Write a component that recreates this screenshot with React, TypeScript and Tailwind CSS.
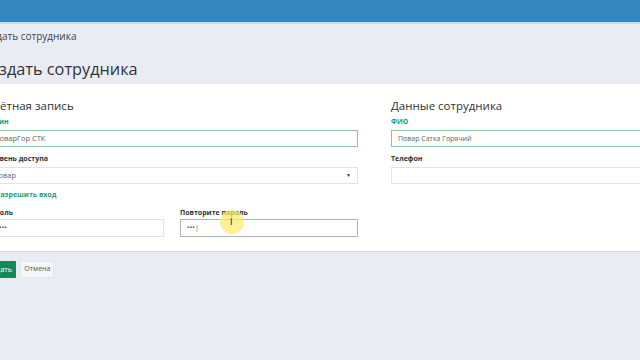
export default function App() {
  return (
    <div className="relative w-[640px] h-[360px] overflow-hidden bg-[#e9ecf3] font-['Open_Sans',sans-serif] text-[#333]">
      {/* Top bar */}
      <div className="h-[22px] bg-[#3585bf]" />
      <div className="h-[2px] bg-[#bfe3ee]" />

      <div className="-ml-[21px] w-[900px]">
        {/* Breadcrumb */}
        <div className="h-[24px] pt-[6px] text-[10px] leading-[12px] text-[#444]">Создать сотрудника</div>

        {/* Title */}
        <h1 className="h-[36px] pt-[10px] text-[16.3px] leading-[22px] text-[#333]">Создать сотрудника</h1>

        {/* Panel */}
        <div className="bg-white border-b border-[#d6dae1] h-[168px] pt-[14px] pl-[7px]">
          <div className="flex gap-[33px]">
            {/* Account */}
            <div className="w-[372px]">
              <h2 className="text-[11.5px] leading-[16px] text-[#333]">Учётная запись</h2>
              <label className="block mt-[3px] text-[7px] leading-[10px] font-bold text-[#1e9b6c]">Логин</label>
              <div className="mt-[3px] h-[17px] border border-[#86c5ab] bg-[#fdfefb] px-[7px] text-[7.5px] leading-[15px] text-[#666]">ПоварГор СТК</div>
              <label className="block mt-[7px] text-[7px] leading-[10px] font-bold text-[#333]">Уровень доступа</label>
              <div className="mt-[3px] h-[17px] border border-[#e2e4e8] px-[6px] flex items-center justify-between text-[7.5px] text-[#666]">
                <span>Повар</span>
                <span className="text-[5px] text-[#333]">▼</span>
              </div>
              <label className="block mt-[6px] ml-[10px] text-[7px] leading-[10px] font-bold text-[#2a9d6f]">Разрешить вход</label>
              <div className="mt-[9px] grid grid-cols-2 gap-[16px]">
                <div>
                  <label className="block text-[7px] leading-[8px] font-bold text-[#333]">Пароль</label>
                  <div className="mt-[2px] h-[18px] border border-[#e2e4e8] px-[12px] text-[7px] leading-[16px] text-[#555]">•••</div>
                </div>
                <div>
                  <label className="block text-[7px] leading-[8px] font-bold text-[#333]">Повторите пароль</label>
                  <div className="mt-[2px] h-[18px] border border-[#a9b7b3] px-[6px] text-[7px] leading-[16px] text-[#555]">•••|</div>
                </div>
              </div>
            </div>

            {/* Employee */}
            <div className="w-[380px]">
              <h2 className="text-[11.5px] leading-[16px] text-[#333]">Данные сотрудника</h2>
              <label className="block mt-[3px] text-[7px] leading-[10px] font-bold text-[#1e9b6c]">ФИО</label>
              <div className="mt-[3px] h-[17px] border border-[#86c5ab] bg-[#fdfefb] px-[6px] text-[7px] leading-[15px] text-[#666]">Повар Сатка Горячий</div>
              <label className="block mt-[7px] text-[7px] leading-[10px] font-bold text-[#333]">Телефон</label>
              <div className="mt-[3px] h-[17px] border border-[#e2e4e8]" />
            </div>
          </div>
        </div>

        {/* Buttons */}
        <div className="mt-[9px] flex gap-[4px]">
          <button className="h-[17px] px-[4px] bg-[#14895a] text-white text-[7.5px] rounded-[1px]">Создать</button>
          <button className="h-[17px] px-[3px] bg-[#f6f7f9] border border-[#e4e6ea] text-[#555] text-[7px] rounded-[1px]">Отмена</button>
        </div>
      </div>

      {/* Cursor highlight */}
      <div className="absolute left-[220px] top-[210px] w-[24px] h-[24px] rounded-full bg-[#fde96a]/70" />
      <div className="absolute left-[230px] top-[218px] text-[9px] leading-[9px] text-[#333] font-['DejaVu_Sans',sans-serif]">I</div>
    </div>
  )
}
